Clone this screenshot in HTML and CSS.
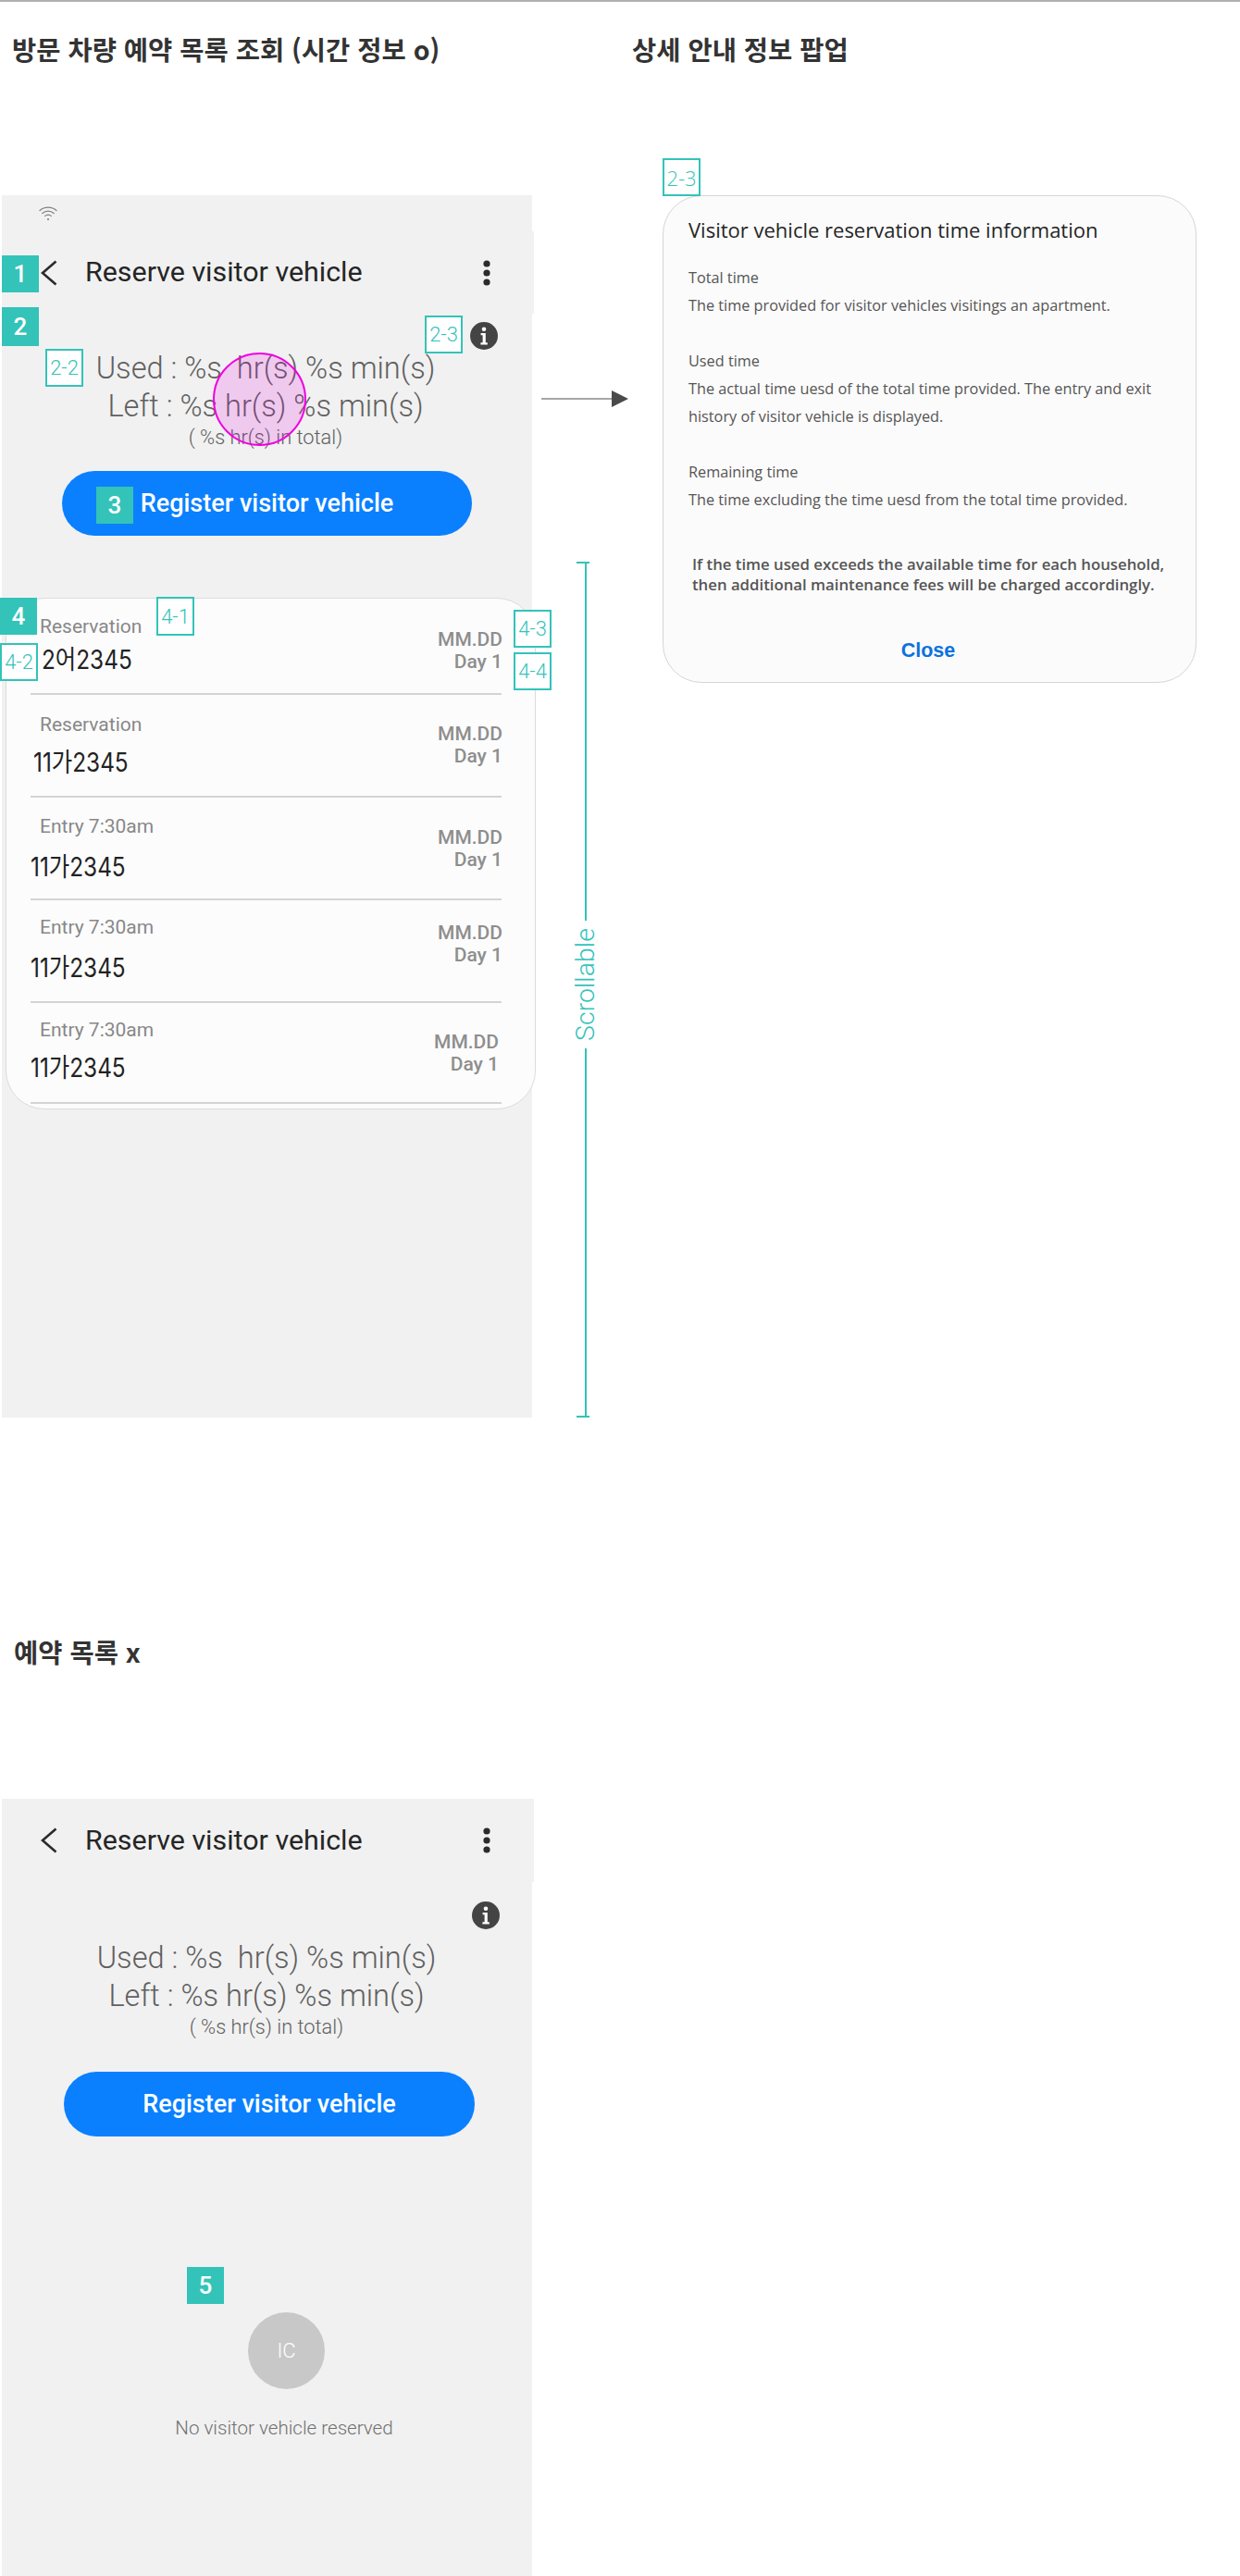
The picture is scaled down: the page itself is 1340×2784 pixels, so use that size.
FILE: index.html
```html
<!DOCTYPE html>
<html lang="ko">
<head>
  <meta charset="UTF-8">
  <meta name="viewport" content="width=device-width, initial-scale=1.0">
  <title>방문 차량 예약 목록 조회</title>
  <link rel="stylesheet" href="styles.css">
</head>
<body>
  <div class="top-row">
    <section class="list-col">
      <h2 class="section-title title-list">방문 차량 예약 목록 조회 (시간 정보 o)</h2>

      <div class="phone phone-list">
        <div class="status-bar">
          <svg class="wifi" viewBox="0 0 20 17" width="20" height="17" fill="none" stroke="#808080" stroke-width="1.2" stroke-linecap="round">
            <path d="M1 5.5C6 1 14 1 19 5.5"/>
            <path d="M3.8 8.5C7.5 5.3 12.5 5.3 16.2 8.5"/>
            <path d="M6.6 11.4C8.6 9.8 11.4 9.8 13.4 11.4"/>
            <circle cx="10" cy="15" r="1.1" fill="#808080" stroke="none"/>
          </svg>
        </div>

        <header class="app-bar">
          <svg class="back" viewBox="0 0 18 28" width="18" height="28" fill="none" stroke="#2b2b2b" stroke-width="2.6">
            <path d="M16.5 1.5L2 14L16.5 26.5"/>
          </svg>
          <h1 class="app-title">Reserve visitor vehicle</h1>
          <svg class="more" viewBox="0 0 8 28" width="8" height="28" fill="#2b2b2b">
            <circle cx="4" cy="4" r="3.6"/>
            <circle cx="4" cy="14" r="3.6"/>
            <circle cx="4" cy="24" r="3.6"/>
          </svg>
        </header>

        <div class="info-row">
          <svg class="info" viewBox="0 0 30 30" width="30" height="30">
            <circle cx="15" cy="15" r="15" fill="#444"/>
            <circle cx="15" cy="7.8" r="2.3" fill="#fff"/>
            <path d="M11.6 12h5.2v10.2h2v2.2h-7.4v-2.2h2.2v-8h-2z" fill="#fff"/>
          </svg>
        </div>

        <div class="stats">
          <p class="stat-line">Used : %s&nbsp; hr(s) %s min(s)</p>
          <p class="stat-line">Left : %s hr(s) %s min(s)</p>
          <p class="stat-total">( %s hr(s) in total)</p>
        </div>

        <button class="register">Register visitor vehicle</button>

        <ul class="visit-list">
          <li class="visit row-1">
            <div>
              <div class="label">Reservation</div>
              <div class="plate">2어2345</div>
            </div>
            <div class="when">
              <div class="date">MM.DD</div>
              <div class="day">Day 1</div>
            </div>
          </li>
          <li class="visit row-2">
            <div>
              <div class="label">Reservation</div>
              <div class="plate">11가2345</div>
            </div>
            <div class="when">
              <div class="date">MM.DD</div>
              <div class="day">Day 1</div>
            </div>
          </li>
          <li class="visit row-3">
            <div>
              <div class="label">Entry 7:30am</div>
              <div class="plate">11가2345</div>
            </div>
            <div class="when">
              <div class="date">MM.DD</div>
              <div class="day">Day 1</div>
            </div>
          </li>
          <li class="visit row-4">
            <div>
              <div class="label">Entry 7:30am</div>
              <div class="plate">11가2345</div>
            </div>
            <div class="when">
              <div class="date">MM.DD</div>
              <div class="day">Day 1</div>
            </div>
          </li>
          <li class="visit row-5">
            <div>
              <div class="label">Entry 7:30am</div>
              <div class="plate">11가2345</div>
            </div>
            <div class="when">
              <div class="date">MM.DD</div>
              <div class="day">Day 1</div>
            </div>
          </li>
        </ul>

        <!-- annotations over the screen -->
        <span class="tag solid tag-1">1</span>
        <span class="tag solid tag-2">2</span>
        <span class="tag solid tag-3">3</span>
        <span class="tag solid tag-4">4</span>
        <span class="tag line tag-22">2-2</span>
        <span class="tag line tag-23">2-3</span>
        <span class="tag line tag-41">4-1</span>
        <span class="tag line tag-42">4-2</span>
        <span class="tag line tag-43">4-3</span>
        <span class="tag line tag-44">4-4</span>
        <div class="touch"></div>

        <svg class="arrow" viewBox="0 0 94 20" width="94" height="20">
          <path d="M0 10H80" stroke="#8a8a8a" stroke-width="1.5"/>
          <path d="M76 1L94 10L76 19z" fill="#4a4a4a"/>
        </svg>

        <div class="scroll-mark">
          <i class="cap"></i>
          <i class="rail rail-top"></i>
          <span class="scroll-text">Scrollable</span>
          <i class="rail rail-bottom"></i>
          <i class="cap"></i>
        </div>
      </div>
    </section>

    <section class="popup-col">
      <h2 class="section-title title-popup">상세 안내 정보 팝업</h2>

      <div class="popup">
        <span class="tag line tag-popup">2-3</span>
        <h3 class="popup-title">Visitor vehicle reservation time information</h3>
        <div class="popup-block">
          <p>Total time</p>
          <p>The time provided for visitor vehicles visitings an apartment.</p>
        </div>
        <div class="popup-block">
          <p>Used time</p>
          <p>The actual time uesd of the total time provided. The entry and exit<br>history of visitor vehicle is displayed.</p>
        </div>
        <div class="popup-block">
          <p>Remaining time</p>
          <p>The time excluding the time uesd from the total time provided.</p>
        </div>
        <p class="popup-note">If the time used exceeds the available time for each household,<br>then additional maintenance fees will be charged accordingly.</p>
        <div class="popup-close">Close</div>
      </div>
    </section>
  </div>

  <section class="empty-section">
    <h2 class="section-title title-empty">예약 목록 x</h2>

    <div class="phone phone-empty">
      <header class="app-bar app-bar-empty">
        <svg class="back" viewBox="0 0 18 28" width="18" height="28" fill="none" stroke="#2b2b2b" stroke-width="2.6">
          <path d="M16.5 1.5L2 14L16.5 26.5"/>
        </svg>
        <h1 class="app-title">Reserve visitor vehicle</h1>
        <svg class="more" viewBox="0 0 8 28" width="8" height="28" fill="#2b2b2b">
          <circle cx="4" cy="4" r="3.6"/>
          <circle cx="4" cy="14" r="3.6"/>
          <circle cx="4" cy="24" r="3.6"/>
        </svg>
      </header>

      <div class="info-row info-row-empty">
        <svg class="info" viewBox="0 0 30 30" width="30" height="30">
          <circle cx="15" cy="15" r="15" fill="#444"/>
          <circle cx="15" cy="7.8" r="2.3" fill="#fff"/>
          <path d="M11.6 12h5.2v10.2h2v2.2h-7.4v-2.2h2.2v-8h-2z" fill="#fff"/>
        </svg>
      </div>

      <div class="stats">
        <p class="stat-line">Used : %s&nbsp; hr(s) %s min(s)</p>
        <p class="stat-line">Left : %s hr(s) %s min(s)</p>
        <p class="stat-total">( %s hr(s) in total)</p>
      </div>

      <button class="register">Register visitor vehicle</button>

      <div class="empty-state">
        <div class="empty-icon">IC</div>
        <p class="empty-text">No visitor vehicle reserved</p>
      </div>

      <span class="tag solid tag-5">5</span>
    </div>
  </section>
</body>
</html>
```

FILE: styles.css
```css
* {
  box-sizing: border-box;
}

body {
  margin: 0;
  width: 1340px;
  height: 2784px;
  overflow: hidden;
  background-color: #fff;
  border-top: 2px solid #b0b0b0;
  font-family: Roboto, "Noto Sans CJK KR", sans-serif;
}

h1, h2, h3, p, ul {
  margin: 0;
  padding: 0;
}

.top-row {
  display: flex;
  height: 1530px;
}

.list-col {
  width: 670px;
}

.section-title {
  font-family: "Noto Sans CJK KR", sans-serif;
  font-size: 28.5px;
  font-weight: 700;
  line-height: 40px;
  color: #333;
}

.title-list {
  padding: 31px 0 0 13px;
  height: 209px;
}

.title-popup {
  padding: 31px 0 0 13px;
  height: 209px;
}

.title-empty {
  padding: 0 0 0 15px;
  height: 179px;
}

/* phone screens */
.phone {
  position: relative;
  width: 573px;
  margin-left: 2px;
  background-color: #f1f1f1;
}

.phone-list {
  height: 1321px;
}

.phone-empty {
  height: 840px;
}

.status-bar {
  height: 39px;
  padding: 11px 0 0 40px;
}

.wifi {
  display: block;
}

.app-bar {
  display: flex;
  align-items: center;
  height: 89px;
  margin-right: -2px;
  padding: 0 47px 0 42px;
  background-color: #f1f1f1;
}

.app-bar-empty {
  height: 90px;
  margin-left: 2px;
  padding-left: 40px;
}

.app-title {
  flex: 1;
  margin: -2px 0 0 30px;
  font-size: 30.4px;
  font-weight: 400;
  color: #252525;
}

.info-row {
  display: flex;
  justify-content: flex-end;
  padding: 9px 37px 0 0;
  height: 39px;
}

.info-row-empty {
  padding: 21px 35px 0 0;
  height: 62px;
}

.stat-line {
  font-size: 32.6px;
  font-weight: 300;
  line-height: 40.5px;
  color: #606060;
  text-align: center;
}

.stats {
  padding-right: 3px;
}

.phone-empty .stats {
  padding-right: 1px;
}

.stat-total {
  margin-top: 1px;
  font-size: 21.8px;
  font-weight: 300;
  line-height: 26px;
  color: #606060;
  text-align: center;
}

.register {
  display: block;
  width: 443px;
  height: 70px;
  margin: 23px 0 0 65px;
  border: none;
  border-radius: 35px;
  background-color: #0a80ff;
  color: #fff;
  font-family: inherit;
  font-size: 27px;
  font-weight: 500;
}

.phone-empty .register {
  width: 444px;
  margin-top: 35px;
  margin-left: 67px;
}

/* reservation list */
.visit-list {
  list-style: none;
  width: 573px;
  height: 553px;
  margin: 67px 0 0 4px;
  padding: 0 36px 0 26px;
  background-color: #fcfcfc;
  border: 1px solid #dcdcdc;
  border-radius: 42px;
}

.visit {
  display: flex;
  justify-content: space-between;
  align-items: flex-start;
  border-bottom: 2px solid #d4d4d4;
}

.label {
  margin-left: 10px;
  font-size: 21px;
  font-weight: 400;
  line-height: 28px;
  color: #888;
}

.plate {
  font-family: Inter, "Noto Sans CJK KR", sans-serif;
  font-size: 28px;
  font-weight: 400;
  line-height: 36px;
  color: #222;
  white-space: nowrap;
  transform: scaleX(0.87);
  transform-origin: left center;
}

.when {
  text-align: right;
}

.date,
.day {
  font-size: 21px;
  font-weight: 500;
  line-height: 24px;
  color: #8e8e8e;
}

.row-1 { height: 104px; padding-top: 16px; }
.row-1 .plate { margin: 4px 0 0 12px; }
.row-1 .when { margin: 16px -1px 0 0; }

.row-2 { height: 111px; padding-top: 18px; }
.row-2 .plate { margin: 9px 0 0 3px; }
.row-2 .when { margin: 12px -1px 0 0; }

.row-3 { height: 111px; padding-top: 17px; }
.row-3 .plate { margin-top: 12px; }
.row-3 .when { margin: 14px -1px 0 0; }

.row-4 { height: 111px; padding-top: 15px; }
.row-4 .plate { margin-top: 12px; }
.row-4 .when { margin: 8px -1px 0 0; }

.row-5 { height: 109px; padding-top: 15px; }
.row-5 .plate { margin-top: 9px; }
.row-5 .when { margin: 15px 3px 0 0; }

/* annotation tags */
.tag {
  position: absolute;
  display: flex;
  align-items: center;
  justify-content: center;
  width: 41px;
  height: 41px;
}

.solid {
  background-color: #33c3b9;
  color: #fff;
  font-size: 26px;
  font-weight: 500;
}

.line {
  background-color: #fff;
  border: 2px solid #33c3b9;
  color: #33c3b9;
  font-size: 22px;
  font-weight: 300;
}

.tag-1 { left: 0; top: 65px; width: 40px; height: 40px; }
.tag-2 { left: 0; top: 121px; width: 40px; height: 42px; }
.tag-3 { left: 102px; top: 315px; width: 40px; height: 40px; }
.tag-4 { left: -2px; top: 435px; width: 40px; height: 40px; }
.tag-5 { left: 200px; top: 506px; width: 40px; height: 40px; }
.tag-22 { left: 47px; top: 166px; }
.tag-23 { left: 457px; top: 130px; }
.tag-41 { left: 167px; top: 434px; height: 42px; }
.tag-42 { left: -2px; top: 484px; }
.tag-43 { left: 553px; top: 448px; }
.tag-44 { left: 553px; top: 494px; }
.tag-popup { left: -1px; top: -41px; }

.touch {
  position: absolute;
  left: 228px;
  top: 170px;
  width: 101px;
  height: 101px;
  border: 2px solid #f000e0;
  border-radius: 50%;
  background-color: rgba(228, 0, 222, 0.16);
}

.arrow {
  position: absolute;
  left: 583px;
  top: 210px;
}

.scroll-mark {
  position: absolute;
  left: 621px;
  top: 396px;
  display: flex;
  flex-direction: column;
  align-items: center;
  width: 14px;
  height: 925px;
}

.cap {
  width: 14px;
  height: 2px;
  background-color: #33c3b9;
}

.rail {
  flex: 1;
  width: 2px;
  margin-left: 6px;
  background-color: #33c3b9;
}

.scroll-text {
  padding: 8px 0;
  margin-left: 6px;
  writing-mode: vertical-rl;
  transform: rotate(180deg);
  font-size: 28.5px;
  font-weight: 300;
  line-height: 28px;
  color: #33c3b9;
}

.rail-top {
  flex: none;
  height: 386px;
}

/* detail popup */
.popup-col {
  width: 670px;
}

.popup {
  position: relative;
  width: 577px;
  height: 527px;
  margin-left: 46px;
  padding: 21px 20px 0 27px;
  background-color: #fbfbfb;
  border: 1px solid #d6d6d6;
  border-radius: 42px;
  font-family: "Open Sans", sans-serif;
}

.popup-title {
  font-size: 22px;
  font-weight: 400;
  line-height: 30px;
  color: #252525;
}

.popup-block {
  margin-top: 30px;
  font-size: 16.25px;
  line-height: 30px;
  color: #555;
}

.popup-title + .popup-block {
  margin-top: 22px;
}

.popup-note {
  margin: 44px 0 0 4px;
  font-size: 16.75px;
  font-weight: 600;
  line-height: 22px;
  color: #555;
}

.popup-close {
  margin-top: 45px;
  padding-right: 10px;
  font-family: "Liberation Sans", sans-serif;
  font-size: 21.5px;
  font-weight: 700;
  line-height: 30px;
  color: #0a72e0;
  text-align: center;
}

/* empty state */
.empty-section {
  padding-top: 233px;
}

.empty-state {
  display: flex;
  flex-direction: column;
  align-items: center;
  margin-top: 190px;
  padding-left: 42px;
}

.empty-icon {
  display: flex;
  align-items: center;
  justify-content: center;
  width: 83px;
  height: 83px;
  border-radius: 50%;
  background-color: #c8c8c8;
  color: #fff;
  font-size: 22px;
  font-weight: 300;
}

.empty-text {
  margin: 28px 0 0 -5px;
  font-size: 20.6px;
  font-weight: 300;
  line-height: 28px;
  color: #707070;
}
```
